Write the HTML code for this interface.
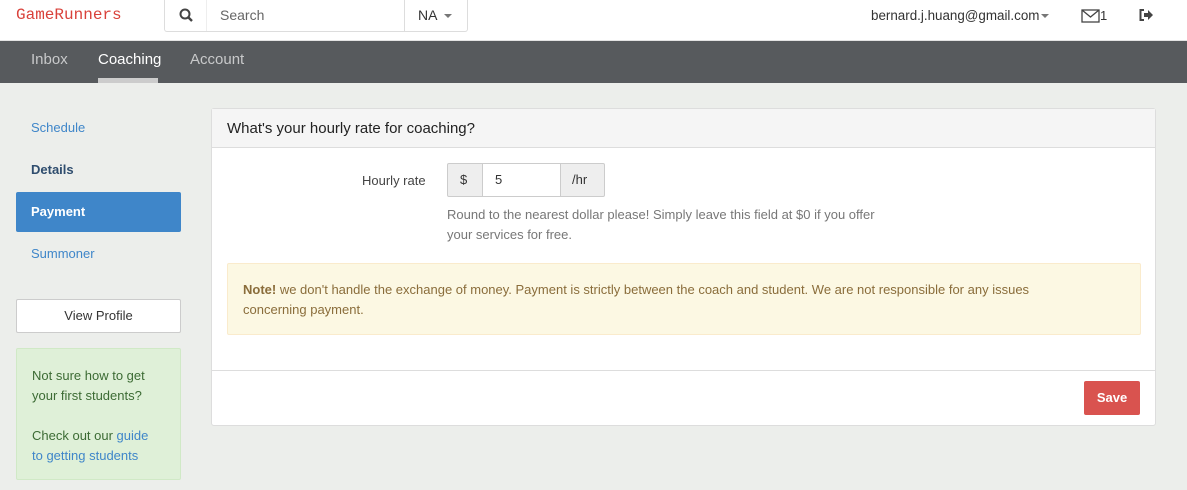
<!DOCTYPE html>
<html><head><style>
*{box-sizing:border-box;margin:0;padding:0}
body{width:1187px;height:490px;overflow:hidden;background:#eceeeb;font-family:"Liberation Sans",sans-serif;font-size:13px;color:#333;position:relative}
.top{position:absolute;left:0;top:0;width:1187px;height:41px;background:#fff;border-bottom:1px solid #e3e3e3}
.logo{position:absolute;left:16px;top:6px;font-family:"Liberation Mono",monospace;font-size:16px;color:#d9413a}
.srch{position:absolute;left:164px;top:0;width:304px;height:32px;border:1px solid #ddd;border-top:none;border-radius:0 0 3px 3px}
.srch .ic{position:absolute;left:0;top:0;width:42px;height:31px;border-right:1px solid #eee}
.srch .t{position:absolute;left:55px;top:7px;color:#666;font-size:14px}
.srch .na{position:absolute;left:239px;top:0;width:64px;height:31px;border-left:1px solid #ddd;padding:7px 0 0 13px;font-size:14px;color:#333}
.caret{display:inline-block;width:0;height:0;border-left:4px solid transparent;border-right:4px solid transparent;border-top:4px solid #777;vertical-align:middle;margin-left:3px}
.nav{position:absolute;left:0;top:41px;width:1187px;height:42px;background:#575a5d}
.nav span{position:absolute;top:10px;font-size:15px;color:#c8c9ca}
.side a{position:absolute;left:16px;width:165px;height:40px;padding:12px 0 0 15px;font-size:13px;font-weight:bold;color:#3f86c9;text-decoration:none}
.panel{position:absolute;left:211px;top:108px;width:945px;height:318px;background:#fff;border:1px solid #ddd;border-radius:3px}
</style></head><body>
<div class="top">
<div class="logo">GameRunners</div>
<div class="srch"><div class="ic"><svg width="42" height="31"><circle cx="20" cy="14" r="4.5" fill="none" stroke="#444" stroke-width="2"/><line x1="23.5" y1="17.5" x2="27" y2="21" stroke="#444" stroke-width="2.4"/></svg></div><div class="t">Search</div><div class="na">NA <span class="caret"></span></div></div>
<div style="position:absolute;left:871px;top:8px;font-size:13.4px;color:#333">bernard.j.huang@gmail.com<span class="caret" style="margin-left:2px"></span></div>
<svg style="position:absolute;left:1081px;top:9px" width="20" height="14"><rect x="1" y="1" width="17" height="12" fill="none" stroke="#444" stroke-width="1.3"/><path d="M1 1L9.5 8L18 1" fill="none" stroke="#444" stroke-width="1.3"/></svg>
<span style="position:absolute;left:1100px;top:8px;color:#333">1</span>
<svg style="position:absolute;left:1138px;top:8px" width="16" height="14"><path d="M6 2H2.5V12H6" fill="none" stroke="#444" stroke-width="2"/><path d="M6 5H10V2L15 7L10 12V9H6Z" fill="#444"/></svg>
</div>
<div class="nav"><span style="left:31px">Inbox</span><span style="left:98px;color:#fff">Coaching</span><span style="left:190px">Account</span><div style="position:absolute;left:98px;top:37px;width:60px;height:5px;background:#ccc"></div></div>
<div class="side">
<a style="top:108px;font-weight:normal">Schedule</a>
<a style="top:150px;color:#2f4d6e">Details</a>
<a style="top:192px;background:#3f86c9;color:#fff;border-radius:2px">Payment</a>
<a style="top:234px;font-weight:normal">Summoner</a>
</div>
<div style="position:absolute;left:16px;top:299px;width:165px;height:34px;background:#fff;border:1px solid #ccc;border-radius:2px;text-align:center;padding-top:8px;color:#333">View Profile</div>
<div style="position:absolute;left:16px;top:348px;width:165px;height:132px;background:#dff0d8;border:1px solid #d0e9c6;border-radius:2px;padding:17px 20px 17px 15px;color:#3c6b34;line-height:20px;font-size:13px">Not sure how to get your first students?<br><br>Check out our <span style="color:#3f86c9">guide to getting students</span></div>
<div class="panel">
<div style="height:39px;background:#f5f5f5;border-bottom:1px solid #ddd;padding:11px 15px;font-size:15px;color:#222">What's your hourly rate for coaching?</div>
<div style="position:absolute;left:150px;top:64px;color:#444">Hourly rate</div>
<div style="position:absolute;left:235px;top:54px;width:158px;height:34px;border:1px solid #ccc;border-radius:2px;background:#eee">
<span style="position:absolute;left:12px;top:8px">$</span>
<div style="position:absolute;left:34px;top:0;width:79px;height:32px;background:#fff;border-left:1px solid #ccc;border-right:1px solid #ccc;padding:8px 12px">5</div>
<span style="position:absolute;left:124px;top:8px">/hr</span></div>
<div style="position:absolute;left:235px;top:96px;width:450px;color:#777;line-height:20px">Round to the nearest dollar please! Simply leave this field at $0 if you offer your services for free.</div>
<div style="position:absolute;left:15px;top:154px;width:914px;height:72px;background:#fcf8e3;border:1px solid #faebcc;border-radius:2px;padding:16px 60px 16px 15px;color:#8a6d3b;line-height:20px"><b>Note!</b> we don't handle the exchange of money. Payment is strictly between the coach and student. We are not responsible for any issues concerning payment.</div>
<div style="position:absolute;left:0;top:261px;width:943px;height:1px;background:#ddd"></div>
<div style="position:absolute;left:872px;top:272px;width:56px;height:34px;background:#d9534f;border-radius:2px;color:#fff;font-weight:bold;text-align:center;padding-top:9px">Save</div>
</div>
</body></html>
